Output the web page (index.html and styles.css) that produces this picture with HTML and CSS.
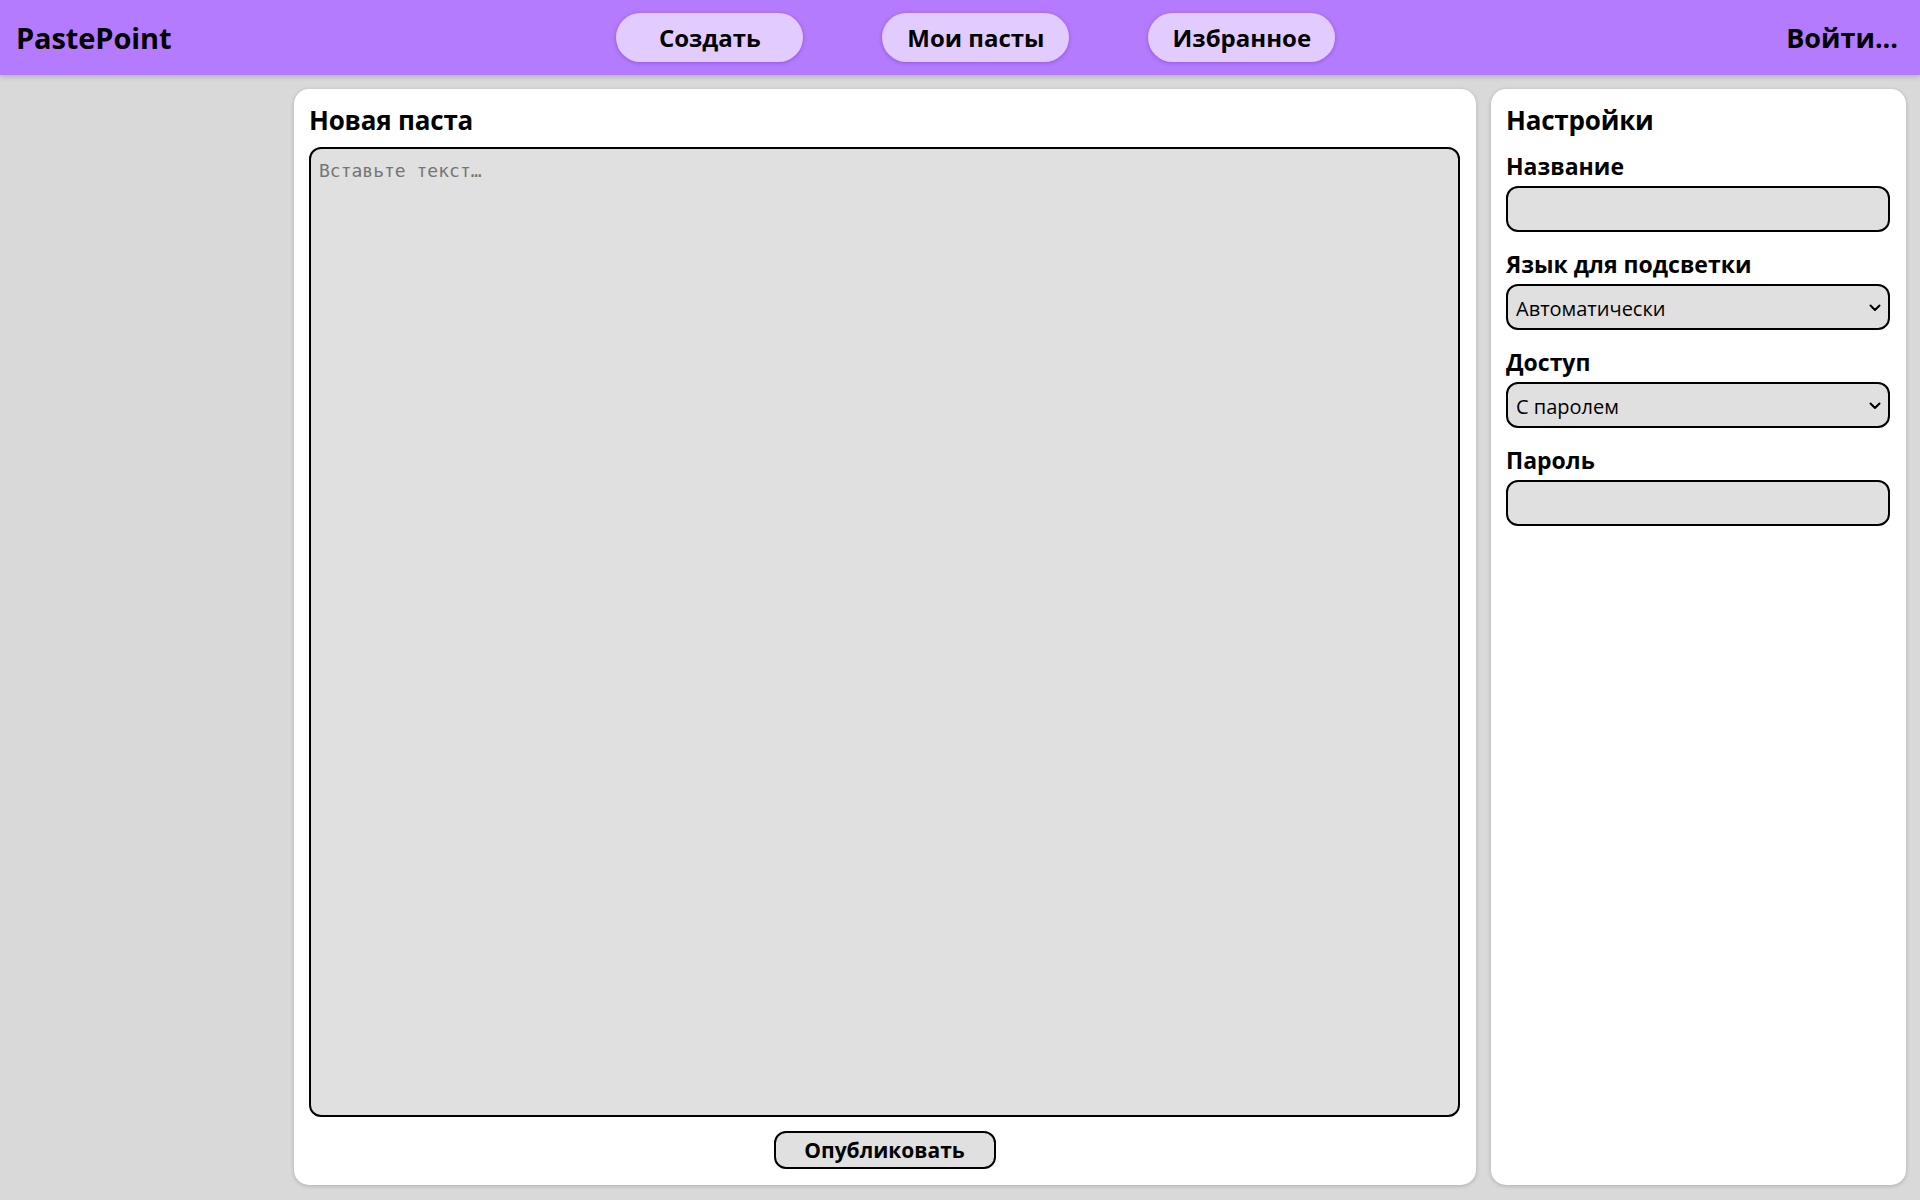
FILE: index.html
```html
<!DOCTYPE html>
<html lang="ru">
<head>
<meta charset="utf-8">
<title>PastePoint</title>
<link rel="stylesheet" href="styles.css">
</head>
<body>
<header class="topbar">
  <div class="logo">PastePoint</div>
  <nav class="nav">
    <a class="nav-btn">Создать</a>
    <a class="nav-btn">Мои пасты</a>
    <a class="nav-btn">Избранное</a>
  </nav>
  <div class="login">Войти...</div>
</header>
<main class="layout">
  <section class="panel editor">
    <h2 class="panel-title">Новая паста</h2>
    <textarea class="code" placeholder="Вставьте текст…"></textarea>
    <div class="actions"><button class="publish">Опубликовать</button></div>
  </section>
  <aside class="panel settings">
    <h2 class="panel-title">Настройки</h2>
    <label class="field-label">Название</label>
    <input class="field" type="text">
    <label class="field-label">Язык для подсветки</label>
    <div class="select-wrap">
      <select class="field">
        <option>Автоматически</option>
      </select>
      <svg class="chevron" width="12" height="8" viewBox="0 0 12 8"><path d="M1.5 1.5 L6 6 L10.5 1.5" fill="none" stroke="#000" stroke-width="2" stroke-linecap="round" stroke-linejoin="round"/></svg>
    </div>
    <label class="field-label">Доступ</label>
    <div class="select-wrap">
      <select class="field">
        <option>С паролем</option>
      </select>
      <svg class="chevron" width="12" height="8" viewBox="0 0 12 8"><path d="M1.5 1.5 L6 6 L10.5 1.5" fill="none" stroke="#000" stroke-width="2" stroke-linecap="round" stroke-linejoin="round"/></svg>
    </div>
    <label class="field-label">Пароль</label>
    <input class="field" type="password">
  </aside>
</main>
</body>
</html>
```

FILE: styles.css
```css
* { box-sizing: border-box; }
html, body { height: 100%; }
body {
  margin: 0;
  background: #d9d9d9;
  font-family: "Open Sans", "Noto Sans", sans-serif;
  color: #000;
  display: flex;
  flex-direction: column;
}
.topbar {
  height: 75px;
  flex: none;
  background: #b57bff;
  display: flex;
  align-items: center;
  padding: 0 22px 0 16px;
  box-shadow: 0 2px 5px rgba(0,0,0,0.18);
  position: relative;
  z-index: 1;
}
.logo {
  font-size: 29px;
  font-weight: 700;
  letter-spacing: -0.1px;
}
.nav {
  flex: 1;
  display: flex;
  justify-content: center;
  gap: 79px;
  margin-right: 6px;
}
.nav-btn {
  width: 187px;
  height: 49px;
  border-radius: 25px;
  background: #e2ccff;
  display: flex;
  align-items: center;
  justify-content: center;
  font-size: 24px;
  font-weight: 700;
  box-shadow: 0 1px 4px rgba(80,20,140,0.35);
}
.login {
  font-size: 27px;
  font-weight: 700;
}
.layout {
  flex: 1;
  min-height: 0;
  display: grid;
  grid-template-columns: 1182px 1fr;
  column-gap: 15px;
  padding: 14px 14px 15px 294px;
}
.panel {
  background: #fff;
  border-radius: 15px;
  box-shadow: 0 1px 4px rgba(0,0,0,0.2);
  padding: 12px 16px 16px 15px;
  display: flex;
  flex-direction: column;
  min-height: 0;
}
.panel-title {
  margin: 0 0 8px;
  font-size: 26px;
  font-weight: 700;
  line-height: 38px;
  letter-spacing: -0.2px;
}
.settings .panel-title {
  margin-bottom: 12px;
}
.code {
  flex: 1;
  resize: none;
  background: #e0e0e0;
  border: 2px solid #000;
  border-radius: 12px;
  padding: 11px 8px 8px;
  font-family: "DejaVu Sans Mono", monospace;
  font-size: 18px;
  outline: none;
}
.code::placeholder { color: #757575; }
.actions {
  display: flex;
  justify-content: center;
  padding-top: 14px;
}
.publish {
  width: 222px;
  height: 38px;
  background: #e0e0e0;
  border: 2px solid #000;
  border-radius: 12px;
  font-family: "Open Sans", "Noto Sans", sans-serif;
  font-size: 21px;
  font-weight: 700;
  color: #000;
  padding: 0;
}
.field-label {
  display: block;
  font-size: 23px;
  font-weight: 700;
  line-height: 30px;
  margin: 0 0 5px;
}
.field {
  display: block;
  width: 100%;
  height: 46px;
  background: #e0e0e0;
  border: 2px solid #000;
  border-radius: 12px;
  margin: 0 0 17px;
  padding: 2px 8px 0;
  font-family: "Open Sans", "Noto Sans", sans-serif;
  font-size: 20px;
  color: #000;
  outline: none;
}
select.field {
  appearance: none;
  -webkit-appearance: none;
  padding-right: 34px;
}
.select-wrap {
  position: relative;
}
.chevron {
  position: absolute;
  right: 9px;
  top: 20px;
  pointer-events: none;
}
```
